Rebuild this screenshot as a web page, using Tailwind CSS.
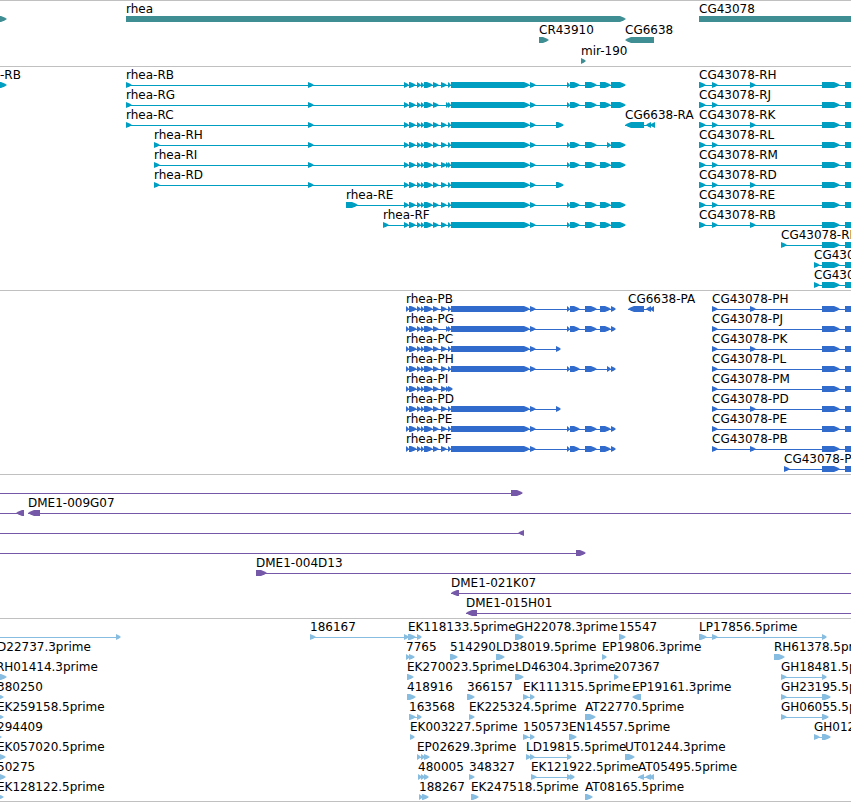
<!DOCTYPE html>
<html lang="en">
<head>
    <meta charset="utf-8">
    <title>Genome browser | rhea region</title>
    <meta name="viewport" content="width=device-width, initial-scale=1">
    <script src="https://cdn.jsdelivr.net/npm/@tailwindcss/browser@4"></script>
</head>
<body class="bg-white font-['DejaVu_Sans',sans-serif] text-xs leading-4 text-black">
    <main class="w-full overflow-hidden border-b border-[#c0c0c0]">
        <section class="border-t border-[#c0c0c0] pb-0.5 text-[#3f8e93]" id="genes" aria-label="Genes"></section>
        <section class="border-t border-[#c0c0c0] pb-[3px] text-[#009ec1]" id="transcripts" aria-label="Transcripts"></section>
        <section class="border-t border-[#c0c0c0] pb-[3px] text-[#316ccc]" id="proteins" aria-label="Proteins"></section>
        <section class="border-t border-[#c0c0c0] pb-[3px] text-[#7558a8]" id="bacs" aria-label="BACs"></section>
        <section class="border-t border-[#c0c0c0] pb-0.5 text-[#87bde0]" id="ests" aria-label="ESTs"></section>
    </main>
    <script>
        const END = 4000;

        const rheaMid = '424-433 433-439';
        const rheaR = '404-409 409-416 417-421 421-424 ' + rheaMid;
        const rheaP = '406-409 409-417 417-421 421-424 ' + rheaMid;
        const big = ' 448-451 451-530 530-536';
        const tailR = ' 567-570 570-580 585-597 600-611 611-626';
        const tailP = ' 567-570 570-580 585-597 600-611 611-616';
        const cgEnd = ' 822-840 845-870 900-' + END;

        const genes = [
            [['', 0, '-20-7'], ['rhea', 126, '126-626'], ['CG43078', 699, '699-' + END]],
            [['CR43910', 539, '539-549'], ['CG6638', 625, '625-654', -1]],
            [['mir-190', 581, '581-586']]
        ];

        const transcripts = [
            [['-RB', 0, '-20-7'], ['rhea-RB', 126, '126-132 308-314 ' + rheaR + ' 441-447' + big + tailR], ['CG43078-RH', 699, '699-706 712-718 750-756' + cgEnd]],
            [['rhea-RG', 126, '126-132 308-314 ' + rheaR + ' 446-449' + big + tailR], ['CG43078-RJ', 699, '699-706 712-718' + cgEnd]],
            [['rhea-RC', 126, '126-132 308-314 ' + rheaR + ' 441-447' + big + ' 556-564'], ['CG6638-RA', 625, '625-644 646-651 650-655', -1], ['CG43078-RK', 699, '699-706 712-718 750-756' + cgEnd]],
            [['rhea-RH', 154, '154-160 308-314 ' + rheaR + ' 441-447' + big + ' 567-570 570-580 585-597 607-611 611-626'], ['CG43078-RL', 699, '699-706 712-718' + cgEnd]],
            [['rhea-RI', 154, '154-160 308-314 ' + rheaR + ' 441-447 446-449' + big + tailR], ['CG43078-RM', 699, '699-706 712-718' + cgEnd]],
            [['rhea-RD', 154, '154-160 308-314 ' + rheaR + ' 441-447' + big + ' 556-564'], ['CG43078-RD', 699, '699-706 712-718 750-756' + cgEnd]],
            [['rhea-RE', 346, '346-358 ' + rheaR + ' 441-447' + big + tailR], ['CG43078-RE', 699, '699-706 712-718' + cgEnd]],
            [['rhea-RF', 383, '383-389 ' + rheaR + ' 441-447' + big + tailR], ['CG43078-RB', 699, '699-706 712-718 750-756' + cgEnd]],
            [['CG43078-RF', 781, '781-787' + cgEnd]],
            [['CG43078-RI', 814, '814-820' + cgEnd]],
            [['CG43078-RG', 814, '814-820' + cgEnd]]
        ];

        const proteins = [
            [['rhea-PB', 406, rheaP + ' 441-447' + big + tailP], ['CG6638-PA', 628, '628-644 646-651 650-654', -1], ['CG43078-PH', 712, '712-718 750-756' + cgEnd]],
            [['rhea-PG', 406, rheaP + ' 446-449' + big + tailP], ['CG43078-PJ', 712, '712-718' + cgEnd]],
            [['rhea-PC', 406, rheaP + ' 441-447' + big + ' 556-561'], ['CG43078-PK', 712, '712-718 750-756' + cgEnd]],
            [['rhea-PH', 406, rheaP + ' 441-447' + big + ' 567-570 570-580 585-597 607-611 611-616'], ['CG43078-PL', 712, '712-718' + cgEnd]],
            [['rhea-PI', 406, rheaP + ' 441-447 446-449 448-453'], ['CG43078-PM', 712, '712-718' + cgEnd]],
            [['rhea-PD', 406, rheaP + ' 441-447' + big + ' 556-561'], ['CG43078-PD', 712, '712-718 750-756' + cgEnd]],
            [['rhea-PE', 406, rheaP + ' 441-447' + big + tailP], ['CG43078-PE', 712, '712-718' + cgEnd]],
            [['rhea-PF', 406, rheaP + ' 441-447' + big + tailP], ['CG43078-PB', 712, '712-718 750-756' + cgEnd]],
            [['CG43078-PF', 784, '784-790' + cgEnd]]
        ];

        const bacs = [
            [['', 0, '-20--10 511-523']],
            [['', 0, '-20--10 16-24', -1], ['DME1-009G07', 28, '28-40 3990-' + END, -1]],
            [['', 0, '-20--10 518-524', -1]],
            [['', 0, '-20--10 576-586']],
            [['DME1-004D13', 256, '256-267 3990-' + END]],
            [['DME1-021K07', 451, '451-459 3990-' + END, -1]],
            [['DME1-015H01', 466, '466-477 3990-' + END, -1]]
        ];

        const ests = [
            [['', 0, '-20--10 116-121'], ['186167', 310, '310-316 404-409 408-416 417-422'], ['EK118133.5prime', 408, ''], ['GH22078.3prime', 515, '515-524'], ['15547', 619, '619-626'], ['LP17856.5prime', 699, '699-707 712-718 822-827']],
            [['D22737.3prime', -3, ''], ['7765', 406, '406-410 409-415'], ['514290', 450, '450-458'], ['LD38019.5prime', 496, '496-505'], ['EP19806.3prime', 602, '602-607'], ['RH61378.5prime', 774, '774-785']],
            [['RH01414.3prime', -4, '-6-7'], ['EK270023.5prime', 407, '407-414'], ['LD46304.3prime', 515, '515-524'], ['207367', 614, '614-619'], ['GH18481.5prime', 781, '781-787 822-827']],
            [['380250', -3, '-6-4'], ['418916', 407, '407-416'], ['366157', 467, '467-475'], ['EK111315.5prime', 523, '523-529 530-535'], ['EP19161.3prime', 632, '632-641', -1], ['GH23195.5prime', 781, '781-787 822-831']],
            [['EK259158.5prime', -3, '-6-4'], ['163568', 409, '409-416 417-422'], ['EK225324.5prime', 469, '469-475'], ['AT22770.5prime', 585, '585-596'], ['GH06055.5prime', 781, '781-787 822-829']],
            [['294409', -3, '-6-2'], ['EK003227.5prime', 410, '410-415'], ['150573', 523, '523-529 530-535'], ['EN14557.5prime', 569, '569-577'], ['GH01265.5prime', 814, '814-820 822-831']],
            [['EK057020.5prime', -3, '-6-6'], ['EP02629.3prime', 417, '417-421 421-425 424-430'], ['LD19815.5prime', 526, '526-531 530-535 567-572'], ['UT01244.3prime', 625, '625-635']],
            [['50275', -3, '-6-6'], ['480005', 418, '418-422 421-425 424-429'], ['348327', 469, '469-475'], ['EK121922.5prime', 531, '531-537 567-572 570-575'], ['AT05495.5prime', 638, '638-644 645-651 649-654', -1]],
            [['EK128122.5prime', -3, '-6-4'], ['188267', 419, '419-423 422-429'], ['EK247518.5prime', 471, '471-479'], ['AT08165.5prime', 585, '585-593']]
        ];

        // box with a pointed end, 6px high
        function arrow(a, b, strand) {
            const w = b - a;
            const head = Math.min(w, 6);
            const back = w <= 6 ? 0 : w - head;
            const pts = [[0, 15], [back, 15], [w - head * 0.4, 16.6], [w, 18], [w - head * 0.4, 19.4], [back, 21], [0, 21]];
            return '<polygon points="' + pts.map(p => (strand < 0 ? b - p[0] : a + p[0]) + ',' + p[1]).join(' ') + '"/>';
        }

        function draw(id, rows, height) {
            document.getElementById(id).innerHTML = rows.map(row => {
                let shapes = '', labels = '';
                row.forEach(([label, x, parts, strand]) => {
                    const exons = [...parts.matchAll(/(-?\d+)-(-?\d+)/g)].map(m => [+m[1], +m[2]]);
                    if (exons.length > 1) {
                        const a = exons[0][0], b = exons[exons.length - 1][1];
                        shapes += '<rect x="' + a + '" y="18" width="' + (b - a - 1) + '" height="1"/>';
                    }
                    exons.forEach(e => shapes += arrow(e[0], e[1], strand || 1));
                    if (label) labels += '<span class="absolute top-0 whitespace-nowrap text-black" style="left:' + x + 'px">' + label + '</span>';
                });
                return '<div class="relative ' + height + '"><svg class="block h-full w-full overflow-visible fill-current" aria-hidden="true">' + shapes + '</svg>' + labels + '</div>';
            }).join('');
        }

        draw('genes', genes, 'h-[21px]');
        draw('transcripts', transcripts, 'h-5');
        draw('proteins', proteins, 'h-5');
        draw('bacs', bacs, 'h-5');
        draw('ests', ests, 'h-5');
    </script>
</body>
</html>
